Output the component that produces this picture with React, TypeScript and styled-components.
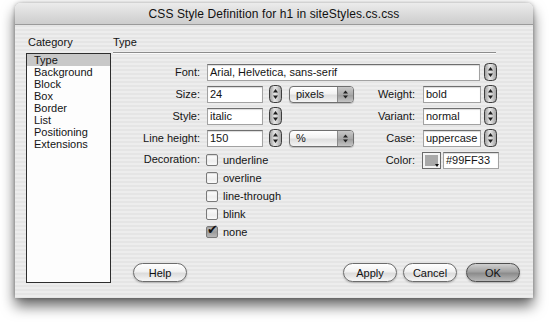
import React from "react";
import styled, { createGlobalStyle } from "styled-components";

const Global = createGlobalStyle`
  html, body { margin: 0; padding: 0; background: #ffffff; }
  body { font-family: "Liberation Sans", Arial, sans-serif; font-size: 11px; color: #141414; }
`;

const Page = styled.div`
  width: 550px;
  height: 323px;
  padding: 3px 0 0 15px;
  box-sizing: border-box;
  overflow: hidden;
`;

const Window = styled.div`
  width: 518px;
  height: 295px;
  border-radius: 6px 6px 0 0;
  background: repeating-linear-gradient(180deg, #ededed 0px, #ededed 2px, #e5e5e5 2px, #e5e5e5 4px);
  box-shadow: 0 8px 14px rgba(0, 0, 0, 0.6), 0 0 4px rgba(0, 0, 0, 0.3);
  display: flex;
  flex-direction: column;
`;

const TitleBar = styled.div`
  height: 21px;
  border-radius: 6px 6px 0 0;
  background: linear-gradient(180deg, #ececec 0%, #dcdcdc 50%, #cdcdcd 100%);
  border-bottom: 1px solid #9a9a9a;
  display: flex;
  align-items: center;
  justify-content: center;
  font-size: 12px;
  color: #111;
  letter-spacing: 0.1px;
`;

const Body = styled.div`
  flex: 1;
  display: flex;
  padding: 11px 13px 0 11px;
`;

const Sidebar = styled.div`
  width: 85px;
  display: flex;
  flex-direction: column;
`;

const Heading = styled.div<{ $indent?: number }>`
  height: 12px;
  line-height: 12px;
  padding-left: ${(p) => p.$indent ?? 0}px;
`;

const CategoryList = styled.ul`
  list-style: none;
  margin: 5px 0 0 0;
  padding: 0;
  height: 230px;
  background: #fdfdfd;
  border: 1px solid #2e2e2e;
  box-sizing: border-box;
`;

const CategoryItem = styled.li<{ $selected?: boolean }>`
  height: 12px;
  line-height: 12px;
  padding-left: 7px;
  background: ${(p) => (p.$selected ? "#c8c8c8" : "transparent")};
`;

const Main = styled.div`
  flex: 1;
  margin-left: 2px;
  display: flex;
  flex-direction: column;
`;

const Rule = styled.div`
  margin: 4px 24px 0 0;
  height: 0;
  border-top: 1px solid #8c8c8c;
  border-bottom: 1px solid #fbfbfb;
`;

const Form = styled.div`
  padding-top: 9px;
  display: flex;
  flex-direction: column;
  gap: 4px;
`;

const Row = styled.div<{ $top?: boolean }>`
  display: flex;
  align-items: ${(p) => (p.$top ? "flex-start" : "center")};
  min-height: 18px;
`;

const Label = styled.span<{ $w: number }>`
  width: ${(p) => p.$w}px;
  flex-shrink: 0;
  text-align: right;
  line-height: 17px;
  white-space: nowrap;
`;

const TextField = styled.div<{ $w: number; $ml: number }>`
  width: ${(p) => p.$w}px;
  margin-left: ${(p) => p.$ml}px;
  height: 17px;
  box-sizing: border-box;
  background: #fff;
  border: 1px solid #a2a2a2;
  border-top-color: #6e6e6e;
  box-shadow: inset 0 1px 1px rgba(0, 0, 0, 0.15);
  padding: 0 2px;
  line-height: 15px;
  white-space: nowrap;
  overflow: hidden;
  flex-shrink: 0;
`;

const SpinnerBox = styled.div<{ $ml: number }>`
  margin-left: ${(p) => p.$ml}px;
  width: 13px;
  height: 18px;
  flex-shrink: 0;
  display: flex;
`;

const Spinner = ({ ml }: { ml: number }) => (
  <SpinnerBox $ml={ml}>
    <svg width="13" height="18" viewBox="0 0 13 18">
      <defs>
        <linearGradient id="spg" x1="0" y1="0" x2="1" y2="0">
          <stop offset="0" stopColor="#9a9a9a" />
          <stop offset="0.45" stopColor="#e8e8e8" />
          <stop offset="1" stopColor="#a0a0a0" />
        </linearGradient>
      </defs>
      <rect x="0.5" y="0.5" width="12" height="17" rx="4" fill="url(#spg)" stroke="#3e3e3e" />
      <path d="M4 7.5 L6.5 4 L9 7.5 Z" fill="#1e1e1e" />
      <path d="M4 10.5 L6.5 14 L9 10.5 Z" fill="#1e1e1e" />
    </svg>
  </SpinnerBox>
);

const SelectBox = styled.div<{ $ml: number }>`
  margin-left: ${(p) => p.$ml}px;
  width: 65px;
  height: 17px;
  box-sizing: border-box;
  border: 1px solid #6f6f6f;
  border-radius: 4px;
  background: linear-gradient(180deg, #ffffff 0%, #f2f2f2 45%, #dedede 55%, #f4f4f4 100%);
  display: flex;
  align-items: center;
  flex-shrink: 0;
  overflow: hidden;
  box-shadow: 0 1px 1px rgba(0, 0, 0, 0.2);
`;

const SelectText = styled.span`
  flex: 1;
  padding-left: 6px;
  line-height: 15px;
`;

const SelectArrows = styled.span`
  width: 15px;
  height: 15px;
  display: flex;
  align-items: center;
  justify-content: center;
  background: linear-gradient(180deg, #c8c8c8 0%, #a9a9a9 50%, #9a9a9a 51%, #c4c4c4 100%);
  border-left: 1px solid #8a8a8a;
`;

const Select = ({ ml, value }: { ml: number; value: string }) => (
  <SelectBox $ml={ml}>
    <SelectText>{value}</SelectText>
    <SelectArrows>
      <svg width="7" height="11" viewBox="0 0 7 11">
        <path d="M1 4.5 L3.5 1.5 L6 4.5 Z" fill="#222" />
        <path d="M1 6.5 L3.5 9.5 L6 6.5 Z" fill="#222" />
      </svg>
    </SelectArrows>
  </SelectBox>
);

const Blank = styled.div<{ $w: number; $ml: number }>`
  width: ${(p) => p.$w}px;
  margin-left: ${(p) => p.$ml}px;
  flex-shrink: 0;
`;

const Checks = styled.div`
  width: 147px;
  margin-left: 6px;
  display: flex;
  flex-direction: column;
  flex-shrink: 0;
`;

const CheckRow = styled.label`
  height: 18px;
  display: flex;
  align-items: center;
  gap: 5px;
`;

const CheckBox = styled.span<{ $checked?: boolean }>`
  width: 12px;
  height: 12px;
  box-sizing: border-box;
  border: 1px solid #7a7a7a;
  border-radius: 2px;
  background: ${(p) =>
    p.$checked
      ? "linear-gradient(180deg, #bdbdbd 0%, #9c9c9c 50%, #b8b8b8 100%)"
      : "linear-gradient(180deg, #ffffff 0%, #eeeeee 60%, #fafafa 100%)"};
  box-shadow: inset 0 1px 1px rgba(0, 0, 0, 0.15);
  position: relative;
  flex-shrink: 0;
`;

const CheckMark = styled.span`
  position: absolute;
  left: 0px;
  top: -4px;
  font-family: "DejaVu Sans", sans-serif;
  font-size: 13px;
  line-height: 14px;
  color: #111;
`;

const ColorGroup = styled.div`
  display: flex;
  align-items: center;
  height: 18px;
`;

const Swatch = styled.div`
  margin-left: 7px;
  width: 19px;
  height: 17px;
  box-sizing: border-box;
  border: 1px solid #6a6a6a;
  background: #f4f4f4;
  padding: 2px;
  position: relative;
  flex-shrink: 0;
`;

const SwatchFill = styled.div<{ $color: string }>`
  width: 100%;
  height: 100%;
  background: ${(p) => p.$color};
`;

const SwatchArrow = styled.span`
  position: absolute;
  right: 1px;
  bottom: 1px;
  width: 0;
  height: 0;
  border-left: 2.5px solid transparent;
  border-right: 2.5px solid transparent;
  border-top: 3px solid #111;
`;

const Buttons = styled.div`
  margin-top: 22px;
  padding-left: 20px;
  display: flex;
  align-items: center;
`;

const Spacer = styled.div`
  flex: 1;
`;

const Button = styled.button<{ $primary?: boolean; $ml?: number }>`
  margin-left: ${(p) => p.$ml ?? 0}px;
  width: 54px;
  height: 19px;
  padding: 0;
  border-radius: 10px;
  border: 1px solid ${(p) => (p.$primary ? "#4e4e4e" : "#6c6c6c")};
  font-family: "Liberation Sans", Arial, sans-serif;
  font-size: 11px;
  color: #111;
  background: ${(p) =>
    p.$primary
      ? "linear-gradient(180deg, #d0d0d0 0%, #a2a2a2 45%, #8c8c8c 55%, #b8b8b8 100%)"
      : "linear-gradient(180deg, #ffffff 0%, #f1f1f1 45%, #dcdcdc 55%, #f6f6f6 100%)"};
  box-shadow: 0 1px 2px rgba(0, 0, 0, 0.25);
`;

const categories = [
  "Type",
  "Background",
  "Block",
  "Box",
  "Border",
  "List",
  "Positioning",
  "Extensions",
];

const decorations = [
  { label: "underline", checked: false },
  { label: "overline", checked: false },
  { label: "line-through", checked: false },
  { label: "blink", checked: false },
  { label: "none", checked: true },
];

export default function App() {
  return (
    <>
      <Global />
      <Page>
        <Window>
          <TitleBar>CSS Style Definition for h1 in siteStyles.cs.css</TitleBar>
          <Body>
            <Sidebar>
              <Heading $indent={2}>Category</Heading>
              <CategoryList>
                {categories.map((c, i) => (
                  <CategoryItem key={c} $selected={i === 0}>
                    {c}
                  </CategoryItem>
                ))}
              </CategoryList>
            </Sidebar>
            <Main>
              <Heading>Type</Heading>
              <Rule />
              <Form>
                <Row>
                  <Label $w={87}>Font:</Label>
                  <TextField $w={273} $ml={7}>Arial, Helvetica, sans-serif</TextField>
                  <Spinner ml={4} />
                </Row>
                <Row>
                  <Label $w={87}>Size:</Label>
                  <TextField $w={56} $ml={7}>24</TextField>
                  <Spinner ml={6} />
                  <Select ml={7} value="pixels" />
                  <Label $w={61}>Weight:</Label>
                  <TextField $w={58} $ml={8}>bold</TextField>
                  <Spinner ml={3} />
                </Row>
                <Row>
                  <Label $w={87}>Style:</Label>
                  <TextField $w={56} $ml={7}>italic</TextField>
                  <Spinner ml={6} />
                  <Blank $w={65} $ml={7} />
                  <Label $w={61}>Variant:</Label>
                  <TextField $w={58} $ml={8}>normal</TextField>
                  <Spinner ml={3} />
                </Row>
                <Row>
                  <Label $w={87}>Line height:</Label>
                  <TextField $w={56} $ml={7}>150</TextField>
                  <Spinner ml={6} />
                  <Select ml={7} value="%" />
                  <Label $w={61}>Case:</Label>
                  <TextField $w={58} $ml={8}>uppercase</TextField>
                  <Spinner ml={3} />
                </Row>
                <Row $top>
                  <Label $w={87}>Decoration:</Label>
                  <Checks>
                    {decorations.map((d) => (
                      <CheckRow key={d.label}>
                        <CheckBox $checked={d.checked}>
                          {d.checked && <CheckMark>✔</CheckMark>}
                        </CheckBox>
                        {d.label}
                      </CheckRow>
                    ))}
                  </Checks>
                  <ColorGroup>
                    <Label $w={62}>Color:</Label>
                    <Swatch>
                      <SwatchFill $color="#a9a9a9" />
                      <SwatchArrow />
                    </Swatch>
                    <TextField $w={56} $ml={2}>#99FF33</TextField>
                  </ColorGroup>
                </Row>
              </Form>
              <Buttons>
                <Button>Help</Button>
                <Spacer />
                <Button>Apply</Button>
                <Button $ml={6}>Cancel</Button>
                <Button $primary $ml={9}>OK</Button>
              </Buttons>
            </Main>
          </Body>
        </Window>
      </Page>
    </>
  );
}
